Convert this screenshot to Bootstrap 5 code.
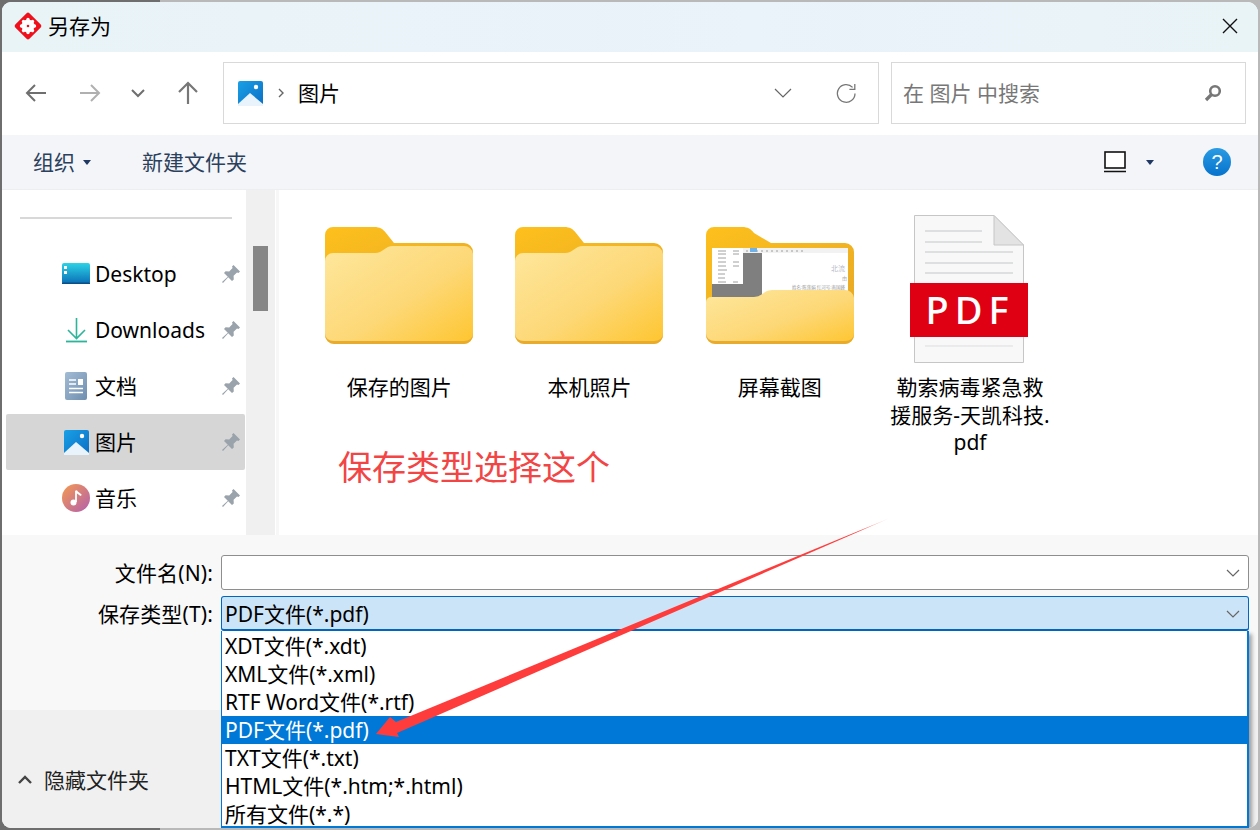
<!DOCTYPE html>
<html lang="zh-CN">
<head>
<meta charset="utf-8">
<title>另存为</title>
<link href="https://cdn.jsdelivr.net/npm/bootstrap@5.3.0/dist/css/bootstrap.min.css" rel="stylesheet">
<style>
html,body{height:830px;overflow:hidden}
body{margin:0;background:linear-gradient(90deg,#6e6e6e 160px,#b9b9b9 160px);font-family:"Noto Sans","Noto Sans CJK SC",sans-serif;font-size:21px;line-height:28px;color:#000}
.dlg{margin:2px 0 0 2px;width:1256px;height:826px;border-radius:9px 11px 10px 9px;overflow:hidden;background:#fff;position:relative}
.ttl{height:50px;background:linear-gradient(90deg,#e9f4f7,#eaf2fa 60%,#e9f4f7);padding:0 0 2px 11px}
.ttl-text{margin-left:5px}
.x-btn{margin-right:20px}
.nav-row{height:83px;padding:10px 8px 0 0}
.nav-icons{width:221px;padding-left:23px;padding-bottom:11px}
.nav-ic{display:block;flex:none}
.gap-fwd{margin-left:32px}
.gap-chev{margin-left:29px}
.gap-up{margin-left:31px}
.addr{width:656px;height:62px;border:1px solid #d9d9d9;padding:0 21px 0 14px;margin-bottom:11px}
.srch{width:355px;height:62px;border:1px solid #d9d9d9;margin-left:12px;padding:0 23px 0 11px;color:#777;margin-bottom:11px}
.crumb{margin:0 14px 0 15px}
.rfr{margin-left:44px}
.tool{height:55px;background:#f3f5f8;padding:0 27px 0 31px;color:#2b405c;border-bottom:1px solid #eceef0}
.caret-d{width:0;height:0;border:4px solid transparent;border-top:5px solid #1f3864;border-bottom:0}
.tool-new{margin-left:51px}
.view-ic{margin-right:20px}
.help-ic{margin-left:49px}
.main-row{height:345px}
.side{width:243px;padding:27px 0 0 4px;overflow:hidden}
.side-rule{height:2px;background:#d8d8d8;margin:0 13px 27px 14px}
.side-row{height:56px;border-radius:2px;width:239px;padding-right:4px}
.side-row.sel{background:#d6d6d6}
.side-ico{width:30px;margin-left:55px;margin-right:4px;display:flex;justify-content:center}
.side-pin{margin-left:auto}
.scr{width:29px;background:#f0f0f0;padding-top:56px;flex:none;margin-left:1px}
.scr-thumb{height:65px;width:15px;background:#868686;margin-left:7px}
.pane{padding:25px 0 0 25px;border-left:3px solid #f7f7f7;margin-left:1px;position:relative}
.tile{width:190.3px;text-align:center;flex:none}
.tile-ico{height:151px;padding-top:12px}
.tile-ico.pdf{padding-top:0}
.pdf-svg{margin-right:2px}
.tile-lab{line-height:27.5px;margin-top:8px;padding:0 13px;word-break:break-all}
.note{position:absolute;left:59px;top:254px;font-size:34px;line-height:44px;color:#f24545;font-family:"Noto Sans CJK SC",sans-serif}
.form-area{height:175px;background:#f8f8f8;padding-top:20px}
.frm-row{height:35px;margin-bottom:6px;position:relative}
.frm-lab{width:211px;text-align:right;flex:none;letter-spacing:.15px}
.frm-inp{width:1028px;margin-left:8px;height:35px;background:#fff;border:1px solid #8e8e8e;border-radius:3px;padding:0 8px 0 3px;flex:none}
.frm-inp.on{background:#cce4f7;border-color:#0067c0;border-width:1px 1px 2px;padding-top:1px}
.drop{position:absolute;left:219px;top:35px;width:1028px;height:197px;background:#fff;border:solid #0078d7;border-width:0 2px 2px 1px;box-shadow:3px 3px 4px rgba(0,0,0,.35);z-index:3;padding-top:1px}
.drop-it{height:28px;line-height:28px;padding-left:3px;white-space:nowrap}
.drop-it.act{background:#0078d7;color:#fff}
.foot{height:118px;background:#f0f0f0;padding:30px 0 8px 15px;color:#222}
.foot-txt{margin-left:11px}
.arrow{position:absolute;left:0;top:0;z-index:5;pointer-events:none}
</style>
</head>
<body>
<svg width="0" height="0" class="d-block" style="height:0">
  <defs>
    <linearGradient id="gB" x1="0" y1="0" x2="1" y2="1"><stop offset="0" stop-color="#fdc01c"/><stop offset="1" stop-color="#e9aa26"/></linearGradient>
    <linearGradient id="gF" x1="0" y1="0" x2="1" y2="1"><stop offset="0" stop-color="#fee79d"/><stop offset=".55" stop-color="#fdd877"/><stop offset="1" stop-color="#fec52e"/></linearGradient>
    <linearGradient id="gP" x1="0" y1="0" x2="1" y2="1"><stop offset="0" stop-color="#19a0e6"/><stop offset="1" stop-color="#0c6ec4"/></linearGradient>
    <linearGradient id="gM" x1="0" y1="0" x2="1" y2="1"><stop offset="0" stop-color="#f59a50"/><stop offset="1" stop-color="#b25fae"/></linearGradient>
    <linearGradient id="gD" x1="0" y1="0" x2="0" y2="1"><stop offset="0" stop-color="#2cd3e6"/><stop offset="1" stop-color="#0a6db5"/></linearGradient>
    <linearGradient id="gDoc" x1="0" y1="0" x2="1" y2="1"><stop offset="0" stop-color="#a3bcd5"/><stop offset="1" stop-color="#6f8eae"/></linearGradient>
    <linearGradient id="gA" gradientUnits="userSpaceOnUse" x1="890" y1="518" x2="376" y2="734"><stop offset="0" stop-color="#ff3c3c" stop-opacity=".15"/><stop offset=".06" stop-color="#ff3c3c"/><stop offset="1" stop-color="#ff3c3c"/></linearGradient>
    <symbol id="pic" viewBox="0 0 25 25"><rect width="25" height="25" rx="2" fill="url(#gP)"/><circle cx="18" cy="6" r="2.200" fill="#fff"/><path d="M0 23 L12 12 L25 23 V25H0Z" fill="#e8f3fb"/></symbol>
    <symbol id="pin" viewBox="0 0 20 20"><path d="M12.500 1 19 7.500 17.500 9 16 8.400 12.600 11.800 12.800 15.400 11 17 7.200 13.200 2 19 1 18 6.800 12.800 3 9 4.600 7.200 8.200 7.400 11.600 4 11 2.500Z" fill="#9aa3ab"/></symbol>
    <symbol id="folder" viewBox="0 0 148 117">
      <path d="M0 50V8a8 8 0 0 1 8-8h41c6 0 9 2 12 6l8 10h70a9 9 0 0 1 9 9v40H0Z" fill="url(#gB)"/>
      <path d="M0 108V34a8 8 0 0 1 8-8h42c8 0 10-7 18-7h71a9 9 0 0 1 9 8v81a9 9 0 0 1-9 9H9a9 9 0 0 1-9-9Z" fill="url(#gF)"/>
      <path d="M0 106c0 5 4 8 9 8h130c5 0 9-3 9-8v2a9 9 0 0 1-9 9H9a9 9 0 0 1-9-9Z" fill="#e8ab2e"/>
    </symbol>
  </defs>
</svg>
<div class="dlg d-flex flex-column">
  <div class="ttl d-flex align-items-center flex-none">
    <svg width="30" height="30" viewBox="0 0 30 30"><rect x="5" y="5" width="20" height="20" rx="2" fill="#f0101c" transform="rotate(45 15 15)"/><circle cx="15" cy="15" r="6.500" fill="#fff"/><g stroke="#fff" stroke-width="3.400" stroke-linecap="round"><path d="M15 8.500v13M8.500 15h13M10.500 10.500l9 9M19.500 10.500l-9 9"/></g><circle cx="15" cy="15" r="1.300" fill="#f0101c"/></svg>
    <span class="ttl-text">另存为</span>
    <svg class="ms-auto x-btn" width="16" height="16" viewBox="0 0 16 16"><path d="M1 1l14 14M15 1 1 15" stroke="#111" stroke-width="1.400" fill="none"/></svg>
  </div>
  <div class="nav-row d-flex align-items-center">
    <div class="nav-icons d-flex align-items-center flex-none">
      <svg class="nav-ic" width="22" height="20" viewBox="0 0 22 20"><path d="M21 10H2M10 2 2 10l8 8" stroke="#6f6f6f" stroke-width="2" fill="none"/></svg>
      <svg class="nav-ic gap-fwd" width="22" height="20" viewBox="0 0 22 20"><path d="M1 10h19M12 2l8 8-8 8" stroke="#b0b0b0" stroke-width="2" fill="none"/></svg>
      <svg class="nav-ic gap-chev" width="16" height="10" viewBox="0 0 16 10"><path d="M2 2l6 6 6-6" stroke="#6f6f6f" stroke-width="2" fill="none"/></svg>
      <svg class="nav-ic gap-up" width="22" height="24" viewBox="0 0 22 24"><path d="M11 23V2M2 11l9-9 9 9" stroke="#777" stroke-width="2.200" fill="none"/></svg>
    </div>
    <div class="addr d-flex align-items-center flex-none">
      <svg width="25" height="25"><use href="#pic"/></svg>
      <svg class="crumb" width="6" height="10" viewBox="0 0 6 10"><path d="M1 1l4 4-4 4" stroke="#666" stroke-width="1.400" fill="none"/></svg>
      <span>图片</span>
      <svg class="ms-auto" width="18" height="10" viewBox="0 0 18 10"><path d="M1 1l8 8 8-8" stroke="#666" stroke-width="1.200" fill="none"/></svg>
      <svg class="rfr" width="21" height="21" viewBox="0 0 21 21"><path d="M19 10.500A8.800 8.800 0 1 1 16.600 4.400" stroke="#777" stroke-width="1.300" fill="none"/><path d="M18.800 1v5.400h-5.400" stroke="#777" stroke-width="1.300" fill="none"/></svg>
    </div>
    <div class="srch d-flex align-items-center flex-none">
      <span>在 图片 中搜索</span>
      <svg class="ms-auto" width="18" height="18" viewBox="0 0 18 18"><circle cx="11" cy="7" r="4.800" stroke="#777" stroke-width="2.600" fill="none"/><path d="M7.500 10.500 2 16" stroke="#777" stroke-width="3.200"/></svg>
    </div>
  </div>
  <div class="tool d-flex align-items-center flex-none">
    <span>组织</span><i class="caret-d ms-2"></i>
    <span class="tool-new">新建文件夹</span>
    <svg class="ms-auto view-ic" width="22" height="22" viewBox="0 0 22 22"><rect x="1" y="1" width="20" height="16" fill="#fff" stroke="#111" stroke-width="1.600"/><path d="M0 20.500h22" stroke="#111" stroke-width="1.600"/></svg>
    <i class="caret-d"></i>
    <svg class="help-ic" width="28" height="28" viewBox="0 0 28 28"><defs><linearGradient id="gH" x1="0" y1="0" x2="0" y2="1"><stop offset="0" stop-color="#2a9be3"/><stop offset="1" stop-color="#0673cd"/></linearGradient></defs><circle cx="14" cy="14" r="14" fill="url(#gH)"/><text x="14" y="21" text-anchor="middle" font-size="20" font-family="Liberation Sans" fill="#fff">?</text></svg>
  </div>
  <div class="main-row d-flex flex-none">
    <div class="side flex-none">
      <div class="side-rule"></div>
      <div class="side-row d-flex align-items-center">
        <span class="side-ico"><svg width="29" height="22" viewBox="0 0 29 22"><rect width="28" height="21" rx="2" fill="url(#gD)"/><rect x="2" y="3" width="3" height="3" fill="#fff"/><rect x="2" y="8" width="3" height="3" fill="#fff"/><rect y="19.500" width="28" height="1.500" fill="#0a4f86"/></svg></span>
        <span>Desktop</span><svg class="side-pin" width="20" height="20"><use href="#pin"/></svg>
      </div>
      <div class="side-row d-flex align-items-center">
        <span class="side-ico"><svg width="21" height="26" viewBox="0 0 21 26"><path d="M10.500 1v20M2 13l8.500 8.500L19 13" stroke="#2cb59a" stroke-width="1.600" fill="none"/><path d="M0 24.500h21" stroke="#2cb59a" stroke-width="1.800"/></svg></span>
        <span>Downloads</span><svg class="side-pin" width="20" height="20"><use href="#pin"/></svg>
      </div>
      <div class="side-row d-flex align-items-center">
        <span class="side-ico"><svg width="22" height="28" viewBox="0 0 22 28"><rect width="22" height="28" rx="2" fill="url(#gDoc)"/><path d="M4 8h7M4 12h7M4 16.500h14M4 20.500h14" stroke="#fff" stroke-width="1.600"/><rect x="13" y="7" width="5" height="6" fill="#fff"/></svg></span>
        <span>文档</span><svg class="side-pin" width="20" height="20"><use href="#pin"/></svg>
      </div>
      <div class="side-row sel d-flex align-items-center">
        <span class="side-ico"><svg width="25" height="25"><use href="#pic"/></svg></span>
        <span>图片</span><svg class="side-pin" width="20" height="20"><use href="#pin"/></svg>
      </div>
      <div class="side-row d-flex align-items-center">
        <span class="side-ico"><svg width="28" height="28" viewBox="0 0 28 28"><circle cx="14" cy="14" r="14" fill="url(#gM)"/><path d="M14 7v11" stroke="#fff" stroke-width="1.800"/><path d="M14 6.500c1 3 4 3 5 5" stroke="#fff" stroke-width="2" fill="none"/><circle cx="11.500" cy="18.500" r="3" fill="#fff"/></svg></span>
        <span>音乐</span><svg class="side-pin" width="20" height="20"><use href="#pin"/></svg>
      </div>
    </div>
    <div class="scr"><div class="scr-thumb"></div></div>
    <div class="pane flex-grow-1 d-flex align-items-start">
      <div class="tile">
        <div class="tile-ico"><svg width="148" height="117"><use href="#folder"/></svg></div>
        <div class="tile-lab">保存的图片</div>
      </div>
      <div class="tile">
        <div class="tile-ico"><svg width="148" height="117"><use href="#folder"/></svg></div>
        <div class="tile-lab">本机照片</div>
      </div>
      <div class="tile">
        <div class="tile-ico">
          <svg width="148" height="117" viewBox="0 0 148 117">
            <path d="M0 60V8a8 8 0 0 1 8-8h28c6 0 9 2 12 6l17 10h74a9 9 0 0 1 9 9v50H0Z" fill="url(#gB)"/>
            <rect x="6" y="21" width="136" height="80" rx="3" fill="#fff"/>
            <rect x="6" y="21" width="136" height="5" fill="#f2f2f2"/>
            <rect x="6" y="26" width="50" height="50" fill="#7f7f7f"/>
            <rect x="6" y="21" width="31" height="36" fill="#fff"/>
            <g stroke="#888" stroke-width=".8"><path d="M12 24h8M27 24h6M12 27h8M27 27h6M12 31h8M12 35h8M27 35h6M12 39h8M27 39h6M12 43h9M12 47h7M12 51h7M12 55h8M27 55h5"/><path d="M40 24h60" stroke-dasharray="2 3"/></g>
            <rect x="44" y="21" width="7" height="4" fill="#6fb2ea"/>
            <text x="125" y="44" font-size="7" fill="#b9bcc8" font-family="Noto Sans CJK SC">北流</text>
            <text x="136" y="53" font-size="5" fill="#aaa" font-family="Noto Sans CJK SC">由</text>
            <text x="86" y="62" font-size="4.500" fill="#999" font-family="Noto Sans CJK SC">姓名:陈莲娟 红河号:南国峰</text>
            <path d="M0 108V75a5 5 0 0 1 5-5h43c8 0 10-7 18-7h73a9 9 0 0 1 9 8v37a9 9 0 0 1-9 9H9a9 9 0 0 1-9-9Z" fill="url(#gF)"/>
            <path d="M0 106c0 5 4 8 9 8h130c5 0 9-3 9-8v2a9 9 0 0 1-9 9H9a9 9 0 0 1-9-9Z" fill="#e8ab2e"/>
          </svg>
        </div>
        <div class="tile-lab">屏幕截图</div>
      </div>
      <div class="tile">
        <div class="tile-ico pdf">
          <svg class="pdf-svg" width="118" height="148" viewBox="0 0 118 148">
            <path d="M4.500 .5H84L113.500 30V147.500H4.500Z" fill="#f8f8f8" stroke="#c6c6c6"/>
            <path d="M84 .5V30H113.500Z" fill="#e3e3e3" stroke="#c6c6c6"/>
            <g stroke-width="1"><path d="M15 16h57M15 27h57M15 37h88M15 48h88M15 58h88" stroke="#c4c6c8"/><path d="M15 131h88" stroke="#dcdde0"/></g>
            <rect y="68" width="118" height="54" fill="#e00014"/>
            <text x="60" y="109" text-anchor="middle" font-size="38" font-weight="500" letter-spacing="6" font-family="Noto Sans" fill="#fff">PDF</text>
          </svg>
        </div>
        <div class="tile-lab">勒索病毒紧急救援服务-天凯科技.pdf</div>
      </div>
      <div class="note">保存类型选择这个</div>
    </div>
  </div>
  <div class="form-area flex-none">
    <div class="frm-row d-flex align-items-center">
      <span class="frm-lab">文件名(N):</span>
      <div class="frm-inp d-flex align-items-center"><svg class="ms-auto" width="14" height="8" viewBox="0 0 14 8"><path d="M1 1l6 6 6-6" stroke="#666" stroke-width="1.200" fill="none"/></svg></div>
    </div>
    <div class="frm-row d-flex align-items-center">
      <span class="frm-lab">保存类型(T):</span>
      <div class="frm-inp on d-flex align-items-center"><span>PDF文件(*.pdf)</span><svg class="ms-auto" width="14" height="8" viewBox="0 0 14 8"><path d="M1 1l6 6 6-6" stroke="#666" stroke-width="1.200" fill="none"/></svg></div>
      <div class="drop">
        <div class="drop-it">XDT文件(*.xdt)</div>
        <div class="drop-it">XML文件(*.xml)</div>
        <div class="drop-it">RTF Word文件(*.rtf)</div>
        <div class="drop-it act">PDF文件(*.pdf)</div>
        <div class="drop-it">TXT文件(*.txt)</div>
        <div class="drop-it">HTML文件(*.htm;*.html)</div>
        <div class="drop-it">所有文件(*.*)</div>
      </div>
    </div>
  </div>
  <div class="foot d-flex align-items-center flex-none">
    <svg width="16" height="10" viewBox="0 0 16 10"><path d="M2 8l6-6 6 6" stroke="#444" stroke-width="2.400" fill="none"/></svg>
    <span class="foot-txt">隐藏文件夹</span>
  </div>
  <svg class="arrow" width="1256" height="826" viewBox="2 2 1256 826"><path d="M890 518 396 722 390 717 376 734 399 737 397 733Z" fill="url(#gA)"/></svg>
</div>
</body>
</html>
